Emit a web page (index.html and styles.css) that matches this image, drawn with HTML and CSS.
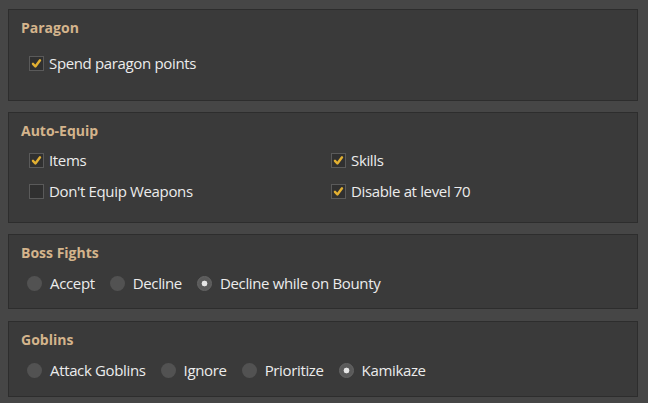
FILE: index.html
```html
<!DOCTYPE html>
<html>
<head>
<meta charset="utf-8">
<link rel="stylesheet" href="styles.css">
</head>
<body>
<div class="page">
  <section class="panel p1">
    <h2 class="title">Paragon</h2>
    <div class="rows">
      <label class="check on"><span class="box"><svg viewBox="0 0 14 14"><path d="M3.2 7.4 L5.8 10.2 L10.8 3.6"/></svg></span>Spend paragon points</label>
    </div>
  </section>
  <section class="panel p2">
    <h2 class="title">Auto-Equip</h2>
    <div class="grid">
      <label class="check on"><span class="box"><svg viewBox="0 0 14 14"><path d="M3.2 7.4 L5.8 10.2 L10.8 3.6"/></svg></span>Items</label>
      <label class="check on"><span class="box"><svg viewBox="0 0 14 14"><path d="M3.2 7.4 L5.8 10.2 L10.8 3.6"/></svg></span>Skills</label>
      <label class="check"><span class="box"></span>Don't Equip Weapons</label>
      <label class="check on"><span class="box"><svg viewBox="0 0 14 14"><path d="M3.2 7.4 L5.8 10.2 L10.8 3.6"/></svg></span>Disable at level 70</label>
    </div>
  </section>
  <section class="panel p3">
    <h2 class="title">Boss Fights</h2>
    <div class="radios">
      <label class="radio"><span class="dot"></span>Accept</label>
      <label class="radio"><span class="dot"></span>Decline</label>
      <label class="radio on"><span class="dot"></span>Decline while on Bounty</label>
    </div>
  </section>
  <section class="panel p4">
    <h2 class="title">Goblins</h2>
    <div class="radios">
      <label class="radio"><span class="dot"></span>Attack Goblins</label>
      <label class="radio"><span class="dot"></span>Ignore</label>
      <label class="radio"><span class="dot"></span>Prioritize</label>
      <label class="radio on"><span class="dot"></span>Kamikaze</label>
    </div>
  </section>
</div>
</body>
</html>
```
FILE: styles.css
```css
html, body {
  margin: 0;
  padding: 0;
  background: #464646;
  height: 100%;
}
body {
  font-family: "Open Sans", "Noto Sans", sans-serif;
  color: #ececec;
  font-size: 15px;
}
.page {
  padding: 9px 10px 0 8px;
  display: flex;
  flex-direction: column;
  gap: 11px;
}
.panel {
  background: #3a3a3a;
  border: 1px solid #2d2d2d;
  box-sizing: border-box;
  padding: 9px 12px 0 12px;
}
.p1 { height: 92px; }
.p2 { height: 111px; }
.p3 { height: 75px; }
.p4 { height: 76px; margin-top: 1px; }
.title {
  margin: 0;
  font-size: 14px;
  font-weight: 700;
  color: #d4b48c;
  line-height: 18px;
}
.rows { padding-top: 16px; }
.check {
  display: flex;
  align-items: center;
  height: 20px;
  padding-left: 8px;
  letter-spacing: -0.35px;
}
.box {
  width: 15px;
  height: 15px;
  box-sizing: border-box;
  border: 1px solid #5a5a5a;
  background: #303030;
  margin-right: 5px;
  display: flex;
  align-items: center;
  justify-content: center;
}
.box svg { width: 13px; height: 13px; }
.box path {
  fill: none;
  stroke: #e2b032;
  stroke-width: 2.6;
  stroke-linecap: round;
  stroke-linejoin: round;
}
.grid {
  display: grid;
  grid-template-columns: 1fr 1fr;
  row-gap: 11px;
  padding-top: 10px;
}
.radios {
  display: flex;
  gap: 15px;
  padding-top: 11px;
  padding-left: 6px;
}
.radio {
  display: flex;
  align-items: center;
  height: 20px;
  letter-spacing: -0.35px;
}
.dot {
  width: 15px;
  height: 15px;
  border-radius: 50%;
  background: #525252;
  margin-right: 8px;
  box-sizing: border-box;
}
.radio.on .dot {
  background: radial-gradient(circle, #e6e6e6 0 2.6px, #5a5a5a 3.2px);
  border: 1px solid #666;
}
```
